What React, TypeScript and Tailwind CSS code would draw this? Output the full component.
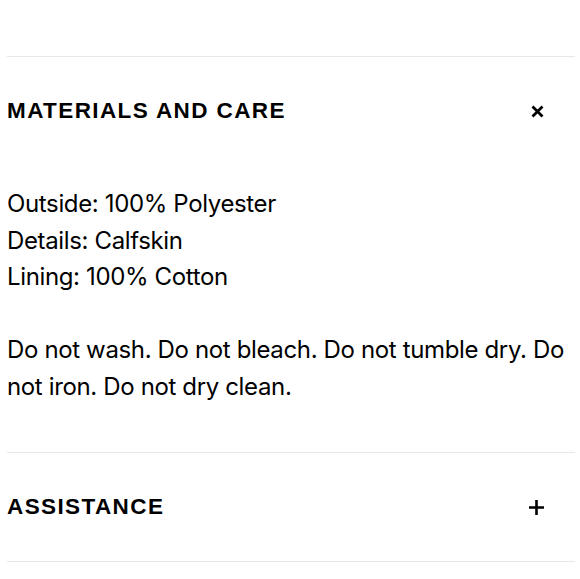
export default function App() {
  return (
    <div className="bg-white w-[580px] h-[579px] pt-[56px] pl-[7px] pr-[5px] text-black">
      <div className="border-t border-[#e8e8e8]">
        <div className="h-[108px] flex items-center justify-between pr-[31px]">
          <h2 className="font-['Liberation_Sans',Arial,sans-serif] font-bold text-[22.5px] tracking-[0.062em] leading-none">
            MATERIALS AND CARE
          </h2>
          <svg width="13" height="13" viewBox="0 0 13 13" className="block">
            <path d="M1.5 1.5 L11.5 11.5 M11.5 1.5 L1.5 11.5" stroke="#000" strokeWidth="2.8" />
          </svg>
        </div>
        <div className="pt-[21px] pb-[47px] font-['Inter',sans-serif] text-[24px] leading-[36.5px] tracking-[-0.015em]">
          <p>Outside: 100% Polyester</p>
          <p>Details: Calfskin</p>
          <p>Lining: 100% Cotton</p>
          <p className="mt-[36.5px]">Do not wash. Do not bleach. Do not tumble dry. Do not iron. Do not dry clean.</p>
        </div>
      </div>
      <div className="border-t border-b border-[#e8e8e8]">
        <div className="h-[108px] flex items-center justify-between pr-[31px]">
          <h2 className="font-['Liberation_Sans',Arial,sans-serif] font-bold text-[22.5px] tracking-[0.062em] leading-none">
            ASSISTANCE
          </h2>
          <svg width="15" height="15" viewBox="0 0 15 15" className="block">
            <path d="M7.5 0 V15 M0 7.5 H15" stroke="#000" strokeWidth="2.6" />
          </svg>
        </div>
      </div>
    </div>
  )
}
